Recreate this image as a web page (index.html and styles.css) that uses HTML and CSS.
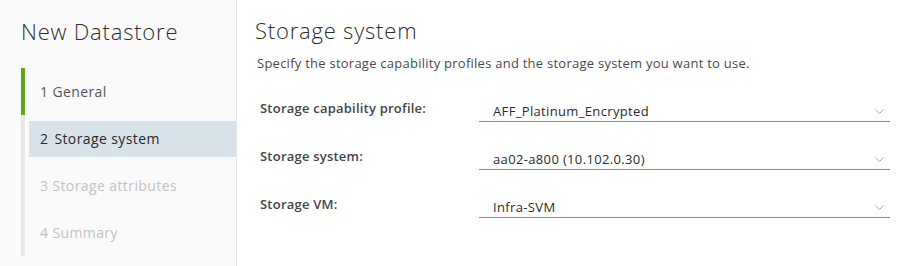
FILE: index.html
```html
<!DOCTYPE html>
<html lang="en">
<head>
<meta charset="utf-8">
<title>New Datastore</title>
<link rel="stylesheet" href="styles.css">
</head>
<body>
<div class="wizard">
  <aside class="sidebar">
    <h1 class="wizard-title">New Datastore</h1>
    <ol class="steps">
      <li class="step done"><span class="num">1</span><span class="lbl">General</span></li>
      <li class="step active"><span class="num">2</span><span class="lbl">Storage system</span></li>
      <li class="step disabled"><span class="num">3</span><span class="lbl">Storage attributes</span></li>
      <li class="step disabled"><span class="num">4</span><span class="lbl">Summary</span></li>
    </ol>
  </aside>
  <main class="content">
    <h2 class="page-title">Storage system</h2>
    <p class="desc">Specify the storage capability profiles and the storage system you want to use.</p>
    <div class="form">
      <div class="row">
        <label class="label">Storage capability profile:</label>
        <div class="select"><span class="value">AFF_Platinum_Encrypted</span><svg class="chev" viewBox="0 0 9 5" width="9" height="5"><path d="M0.5 0.5 L4.5 4.5 L8.5 0.5" fill="none" stroke="#a8a8a8" stroke-width="1"/></svg></div>
      </div>
      <div class="row">
        <label class="label">Storage system:</label>
        <div class="select"><span class="value">aa02-a800 (10.102.0.30)</span><svg class="chev" viewBox="0 0 9 5" width="9" height="5"><path d="M0.5 0.5 L4.5 4.5 L8.5 0.5" fill="none" stroke="#a8a8a8" stroke-width="1"/></svg></div>
      </div>
      <div class="row">
        <label class="label">Storage VM:</label>
        <div class="select"><span class="value">Infra-SVM</span><svg class="chev" viewBox="0 0 9 5" width="9" height="5"><path d="M0.5 0.5 L4.5 4.5 L8.5 0.5" fill="none" stroke="#a8a8a8" stroke-width="1"/></svg></div>
      </div>
    </div>
  </main>
</div>
</body>
</html>
```

FILE: styles.css
```css
* { box-sizing: border-box; }
html, body { margin: 0; padding: 0; background: #fff; }
body { font-family: "Open Sans", "Lato", sans-serif; color: #333; }
.wizard { display: flex; width: 921px; height: 266px; }
.sidebar {
  width: 237px;
  flex: none;
  background: #fafafa;
  border-right: 1px solid #e6e6e6;
  padding-top: 17px;
}
.wizard-title {
  margin: 0 0 0 21px;
  font-size: 22px;
  font-weight: 300;
  line-height: 28px;
  color: #2d2d2d;
  letter-spacing: 0.8px;
}
.steps {
  list-style: none;
  margin: 23px 0 0 21px;
  padding: 0;
  border-left: 4px solid #e8e8e8;
}
.step {
  height: 47px;
  padding: 6px 0 5px 4px;
  margin-left: -4px;
  border-left: 4px solid transparent;
  display: flex;
}
.step .num, .step .lbl { line-height: 36px; font-size: 14px; letter-spacing: 0.4px; }
.step .num { margin-left: 11px; }
.step .lbl { margin-left: 4px; }
.step.active .lbl { margin-left: 6px; }
.step.active {
  background: linear-gradient(#d8e3e9, #d8e3e9) no-repeat 4px 6px / calc(100% - 4px) 36px;
}
.step.done { color: #565656; border-left-color: #62a420; }
.step.active { color: #2b2b2b; }
.step.disabled { color: #c3c3c3; }
.content { flex: 1; padding: 16px 0 0 18px; }
.page-title {
  margin: 0;
  font-size: 22px;
  font-weight: 300;
  line-height: 28px;
  color: #2d2d2d;
  letter-spacing: 0.8px;
}
.desc {
  margin: 10px 0 0 2px;
  font-size: 13px;
  line-height: 18px;
  color: #4a4a4a;
  letter-spacing: 0.25px;
}
.form { margin-top: 2px; padding-left: 5px; }
.row { display: flex; align-items: flex-end; height: 48px; }
.label {
  width: 219px;
  font-size: 13px;
  font-weight: 600;
  color: #454545;
  line-height: 18px;
  margin-bottom: 5px;
  letter-spacing: 0.22px;
}
.select {
  width: 411px;
  height: 26px;
  border-bottom: 1px solid #8c8c8c;
  display: flex;
  align-items: flex-end;
  padding: 0 6px 1px 14px;
}
.value { flex: 1; font-size: 13px; line-height: 18px; color: #2b2b2b; letter-spacing: 0.35px; }
.chev { flex: none; margin-bottom: 6px; }
```
